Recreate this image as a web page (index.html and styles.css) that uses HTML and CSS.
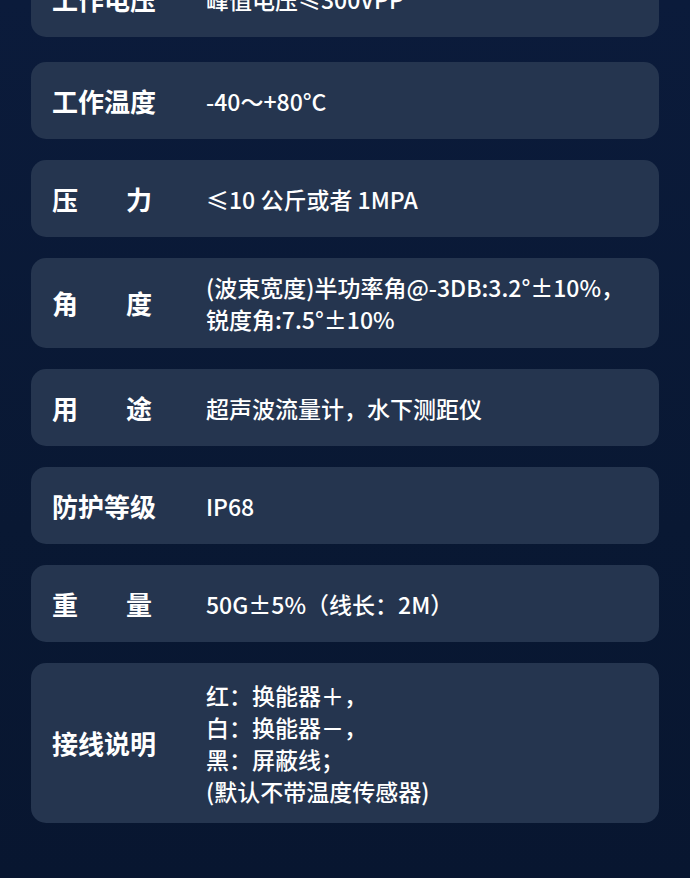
FILE: index.html
```html
<!DOCTYPE html>
<html lang="zh-CN">
<head>
<meta charset="utf-8">
<title>参数</title>
<link rel="stylesheet" href="styles.css">
</head>
<body>
<main class="spec-list">
  <div class="spec spec--first">
    <div class="spec__label">工作电压</div>
    <div class="spec__value">峰值电压≤300VPP</div>
  </div>
  <div class="spec">
    <div class="spec__label">工作温度</div>
    <div class="spec__value">-40～+80°C</div>
  </div>
  <div class="spec">
    <div class="spec__label spec__label--spread"><span>压</span><span>力</span></div>
    <div class="spec__value">≤10 公斤或者 1MPA</div>
  </div>
  <div class="spec spec--multi">
    <div class="spec__label spec__label--spread"><span>角</span><span>度</span></div>
    <div class="spec__value">(波束宽度)半功率角@-3DB:3.2°±10%，<br>锐度角:7.5°±10%</div>
  </div>
  <div class="spec">
    <div class="spec__label spec__label--spread"><span>用</span><span>途</span></div>
    <div class="spec__value">超声波流量计，水下测距仪</div>
  </div>
  <div class="spec">
    <div class="spec__label">防护等级</div>
    <div class="spec__value">IP68</div>
  </div>
  <div class="spec">
    <div class="spec__label spec__label--spread"><span>重</span><span>量</span></div>
    <div class="spec__value">50G±5%（线长：2M）</div>
  </div>
  <div class="spec spec--wiring">
    <div class="spec__label">接线说明</div>
    <div class="spec__value">红：换能器＋，<br>白：换能器－，<br>黑：屏蔽线；<br>(默认不带温度传感器)</div>
  </div>
</main>
</body>
</html>
```

FILE: styles.css
```css
html, body {
  margin: 0;
  padding: 0;
}

body {
  width: 690px;
  height: 878px;
  overflow: hidden;
  background: linear-gradient(180deg, #0b1b3b 0%, #091833 60%, #081630 100%);
  font-family: "Noto Sans CJK SC", "Noto Sans", sans-serif;
  color: #ffffff;
}

.spec-list {
  display: flex;
  flex-direction: column;
  gap: 21px;
  margin-top: -39px;
  padding: 0 31px;
}

.spec {
  display: flex;
  align-items: center;
  min-height: 77px;
  box-sizing: border-box;
  padding: 13px 21px;
  background: #25354f;
  border-radius: 15px;
}

.spec--first {
  min-height: 76px;
  margin-bottom: 4px;
}

.spec--wiring {
  padding-top: 16px;
  padding-bottom: 16px;
}

.spec__label {
  flex: 0 0 154px;
  font-size: 26px;
  font-weight: 700;
  line-height: 32px;
}

.spec__label--spread {
  display: flex;
  justify-content: space-between;
  box-sizing: border-box;
  padding-right: 54px;
}

.spec__value {
  font-size: 23px;
  font-weight: 500;
  line-height: 32px;
}
```
